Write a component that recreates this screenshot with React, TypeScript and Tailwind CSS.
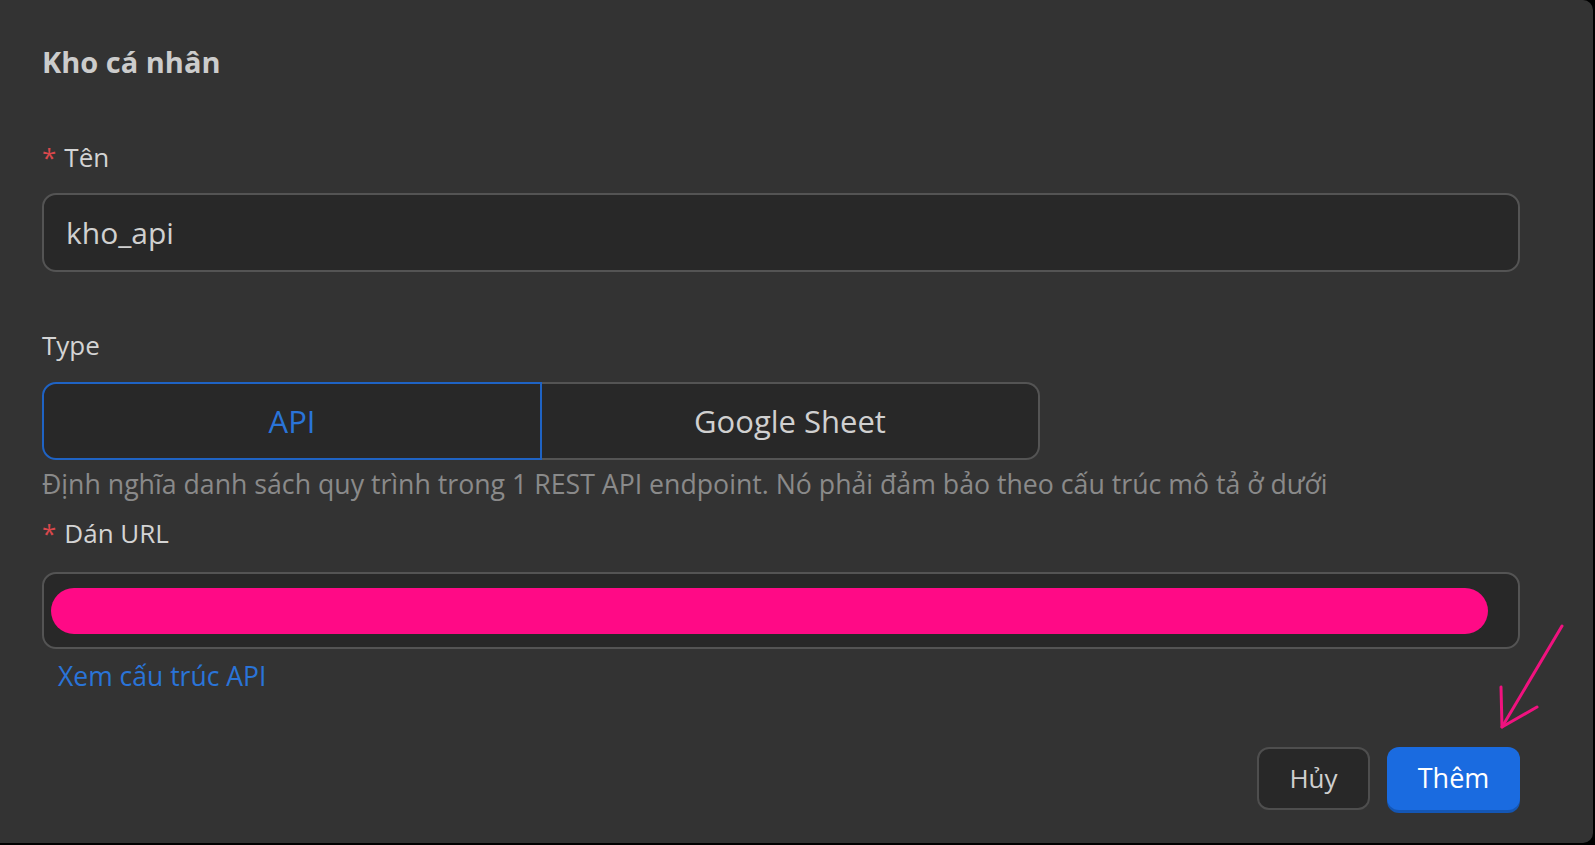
const font = { fontFamily: '"Open Sans", "Noto Sans", sans-serif' }

function Required() {
  return <span className="mr-2 text-[#d9484c]">*</span>
}

function Arrow() {
  return (
    <svg className="absolute left-[1490px] top-[620px]" width="80" height="115" viewBox="0 0 80 115" fill="none">
      <path d="M72 6 L12 107" stroke="#f0127f" strokeWidth="3" strokeLinecap="round" />
      <path d="M11 67 L12 107 L47 87" stroke="#f0127f" strokeWidth="3" strokeLinecap="round" strokeLinejoin="round" />
    </svg>
  )
}

export default function App() {
  return (
    <div className="relative h-[845px] w-[1595px] overflow-hidden bg-black" style={font}>
      <div className="relative h-[843px] w-[1593px] rounded-r-[10px] bg-[#333333] pl-[42px]">
        <div className="flex w-[1478px] flex-col">
          <h1 className="mt-[42px] text-[29px] font-bold leading-[40px] text-[#cccccc]">Kho cá nhân</h1>

          <label className="mt-[57px] text-[26px] leading-[36px] text-[#d4d4d4]">
            <Required />
            Tên
          </label>
          <div className="mt-[18px] flex h-[79px] items-center rounded-[14px] border-2 border-[#545454] bg-[#282828] px-[22px]">
            <span className="text-[30px] text-[#d0d0d0]">kho_api</span>
          </div>

          <label className="mt-[55px] text-[26px] leading-[36px] text-[#d4d4d4]">Type</label>
          <div className="mt-[19px] flex h-[78px] w-[998px]">
            <button className="flex-1 rounded-l-[14px] border-2 border-[#1f63c4] bg-[#282828] text-[31px] text-[#2a74d8]">
              API
            </button>
            <button className="flex-1 rounded-r-[14px] border-2 border-l-0 border-[#545454] bg-[#282828] text-[31px] text-[#d0d0d0]">
              Google Sheet
            </button>
          </div>
          <p className="mt-[6px] text-[26.7px] leading-[36px] text-[#8a8a8a]">
            Định nghĩa danh sách quy trình trong 1 REST API endpoint. Nó phải đảm bảo theo cấu trúc mô tả ở dưới
          </p>

          <label className="mt-[13px] text-[26px] leading-[36px] text-[#d4d4d4]">
            <Required />
            Dán URL
          </label>
          <div className="mt-[21px] flex h-[77px] items-center rounded-[14px] border-2 border-[#545454] bg-[#282828] pl-[7px] pr-[30px]">
            <div className="h-[46px] flex-1 rounded-full bg-[#ff0a86]" />
          </div>
          <a className="ml-[16px] mt-[9px] text-[26.5px] leading-[36px] text-[#2a74d8]">Xem cấu trúc API</a>

          <div className="mt-[53px] flex justify-end gap-[17px]">
            <button className="h-[63px] w-[113px] rounded-[12px] border-2 border-[#4e4e4e] bg-[#282828] text-[26px] text-[#cfcfcf]">
              Hủy
            </button>
            <button className="h-[63px] w-[133px] rounded-[12px] bg-[#1a6be0] text-[27px] font-medium text-white shadow-[0_3px_0_#1456b4]">
              Thêm
            </button>
          </div>
        </div>
        <Arrow />
      </div>
    </div>
  )
}
